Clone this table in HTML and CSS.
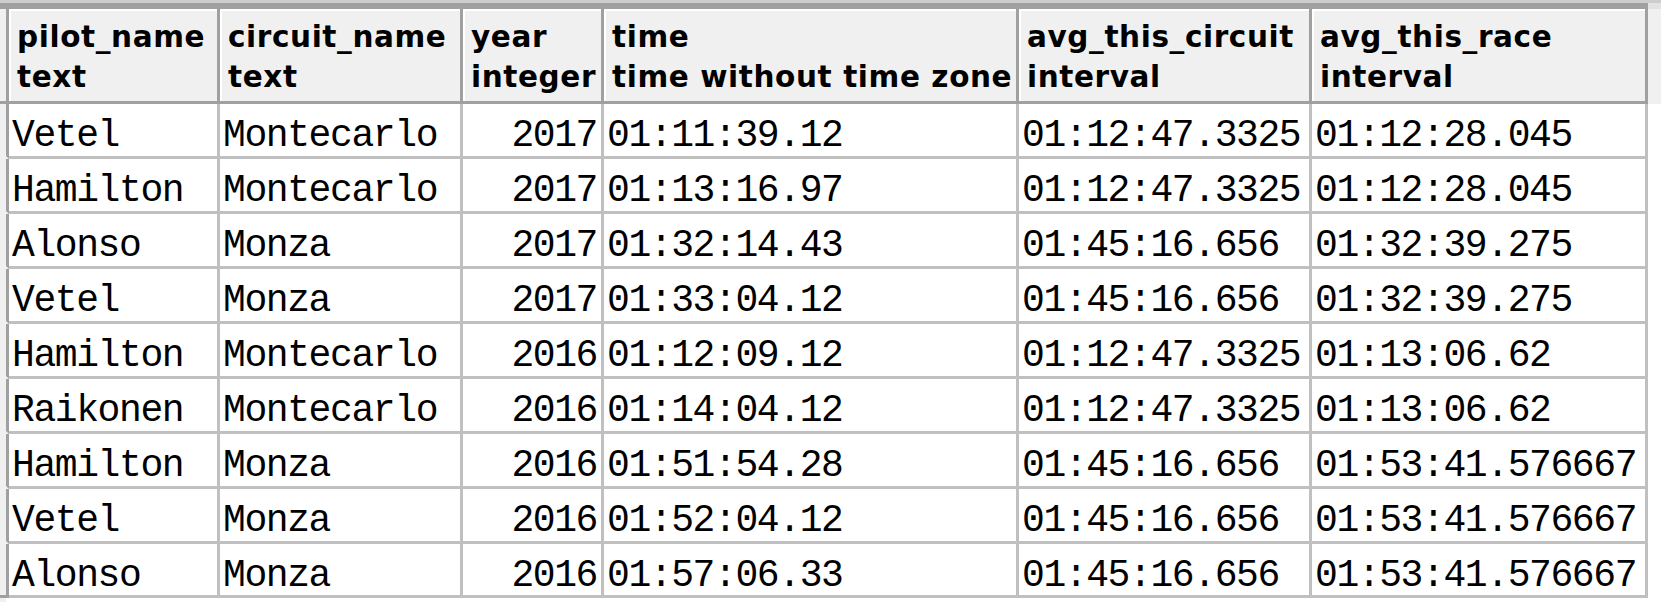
FILE: index.html
```html
<!DOCTYPE html>
<html lang="en">
<head>
<meta charset="utf-8">
<title>Query result</title>
<link rel="stylesheet" href="styles.css">
</head>
<body>
<div class="topstrip"></div>
<div class="grid">
  <div class="row head">
    <div class="rh hrh"></div>
    <div class="hcell"><span>pilot_name</span><span>text</span></div>
    <div class="hcell"><span>circuit_name</span><span>text</span></div>
    <div class="hcell"><span>year</span><span>integer</span></div>
    <div class="hcell"><span>time</span><span>time without time zone</span></div>
    <div class="hcell"><span>avg_this_circuit</span><span>interval</span></div>
    <div class="hcell"><span>avg_this_race</span><span>interval</span></div>
    <div class="hfill"></div>
  </div>
  <div class="row">
    <div class="rh"></div><div class="cell">Vetel</div><div class="cell">Montecarlo</div><div class="cell num">2017</div><div class="cell">01:11:39.12</div><div class="cell">01:12:47.3325</div><div class="cell">01:12:28.045</div><div class="fill"></div>
  </div>
  <div class="row">
    <div class="rh"></div><div class="cell">Hamilton</div><div class="cell">Montecarlo</div><div class="cell num">2017</div><div class="cell">01:13:16.97</div><div class="cell">01:12:47.3325</div><div class="cell">01:12:28.045</div><div class="fill"></div>
  </div>
  <div class="row">
    <div class="rh"></div><div class="cell">Alonso</div><div class="cell">Monza</div><div class="cell num">2017</div><div class="cell">01:32:14.43</div><div class="cell">01:45:16.656</div><div class="cell">01:32:39.275</div><div class="fill"></div>
  </div>
  <div class="row">
    <div class="rh"></div><div class="cell">Vetel</div><div class="cell">Monza</div><div class="cell num">2017</div><div class="cell">01:33:04.12</div><div class="cell">01:45:16.656</div><div class="cell">01:32:39.275</div><div class="fill"></div>
  </div>
  <div class="row">
    <div class="rh"></div><div class="cell">Hamilton</div><div class="cell">Montecarlo</div><div class="cell num">2016</div><div class="cell">01:12:09.12</div><div class="cell">01:12:47.3325</div><div class="cell">01:13:06.62</div><div class="fill"></div>
  </div>
  <div class="row">
    <div class="rh"></div><div class="cell">Raikonen</div><div class="cell">Montecarlo</div><div class="cell num">2016</div><div class="cell">01:14:04.12</div><div class="cell">01:12:47.3325</div><div class="cell">01:13:06.62</div><div class="fill"></div>
  </div>
  <div class="row">
    <div class="rh"></div><div class="cell">Hamilton</div><div class="cell">Monza</div><div class="cell num">2016</div><div class="cell">01:51:54.28</div><div class="cell">01:45:16.656</div><div class="cell">01:53:41.576667</div><div class="fill"></div>
  </div>
  <div class="row">
    <div class="rh"></div><div class="cell">Vetel</div><div class="cell">Monza</div><div class="cell num">2016</div><div class="cell">01:52:04.12</div><div class="cell">01:45:16.656</div><div class="cell">01:53:41.576667</div><div class="fill"></div>
  </div>
  <div class="row last">
    <div class="rh"></div><div class="cell">Alonso</div><div class="cell">Monza</div><div class="cell num">2016</div><div class="cell">01:57:06.33</div><div class="cell">01:45:16.656</div><div class="cell">01:53:41.576667</div><div class="fill"></div>
  </div>
</div>
</body>
</html>
```
FILE: styles.css
```css
html, body {
  margin: 0;
  padding: 0;
}
body {
  width: 1661px;
  height: 602px;
  overflow: hidden;
  background: linear-gradient(90deg, #f0f0f0 6px, #ffffff 6px);
  color: #000;
}
.topstrip {
  height: 3px;
  background: #cdcdcd;
}
.grid {
  display: grid;
  grid-template-columns: 9px 211px 243px 141px 415px 293px 336px 1fr;
  grid-template-rows: 101px repeat(8, 55px) 54px;
}
.row {
  display: contents;
}
.rh {
  box-sizing: border-box;
  background: #f0f0f0;
  border-right: 3px solid #a0a0a0;
  border-bottom: 3px solid #f0f0f0;
}
.hrh {
  border-top: 6px solid #a0a0a0;
  border-bottom: 3px solid #a0a0a0;
}
.last .rh {
  border-bottom-color: #a0a0a0;
}
.hcell {
  box-sizing: border-box;
  background: #f0f0f0;
  border-top: 6px solid #a0a0a0;
  border-right: 3px solid #a0a0a0;
  border-bottom: 3px solid #a0a0a0;
  box-shadow: inset 2px 2px 0 #ffffff;
  padding: 8px 0 0 8px;
  font-family: "DejaVu Sans", Verdana, sans-serif;
  font-weight: bold;
  font-size: 29.5px;
  letter-spacing: 0.6px;
  line-height: 40px;
  white-space: nowrap;
  overflow: hidden;
  display: flex;
  flex-direction: column;
}
.hfill {
  background: #f0f0f0;
  border-top: 6px solid #e2e2e2;
}
.cell {
  box-sizing: border-box;
  background: #ffffff;
  border-right: 3px solid #c0c0c0;
  border-bottom: 3px solid #c0c0c0;
  padding: 12px 0 0 3px;
  font-family: "Liberation Mono", "Courier New", monospace;
  font-size: 38px;
  letter-spacing: -1.4px;
  line-height: 40px;
  white-space: nowrap;
  overflow: hidden;
}
.num {
  text-align: right;
  padding-right: 4px;
}
.fill {
  background: #ffffff;
}
```
